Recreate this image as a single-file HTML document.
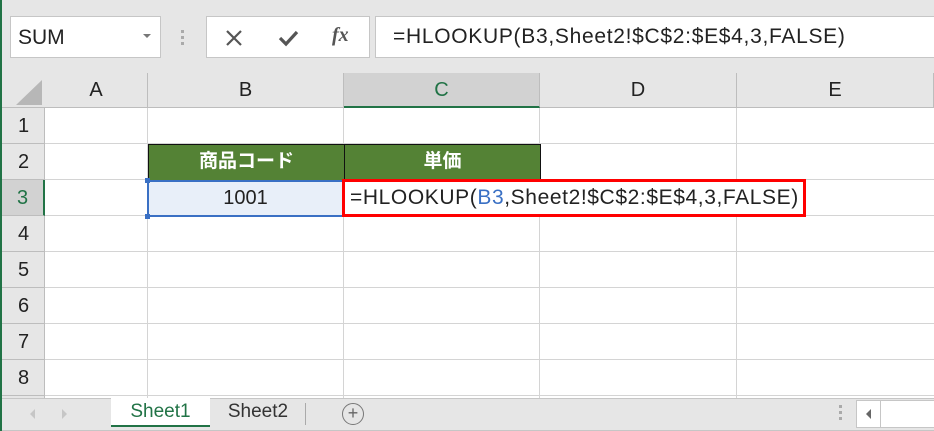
<!DOCTYPE html>
<html><head><meta charset="utf-8"><style>
*{margin:0;padding:0;box-sizing:border-box}
body{width:934px;height:431px;overflow:hidden;background:#e6e6e6;font-family:"Liberation Sans","Noto Sans CJK JP",sans-serif;position:relative}
.a{position:absolute}
.hl{position:absolute;height:1px;background:#d4d4d4}
.vl{position:absolute;width:1px;background:#d4d4d4}
.ch{position:absolute;top:73px;height:35px;line-height:35px;text-align:center;font-size:20px;color:#222;border-right:1px solid #bdbdbd}
.rh{position:absolute;left:2px;width:43px;height:36px;line-height:36px;text-align:center;font-size:20px;color:#222;border-bottom:1px solid #bdbdbd}
</style></head><body>
<div class="a" style="left:0;top:0;width:2px;height:431px;background:#217346"></div>
<div class="a" style="left:10px;top:16px;width:151px;height:42px;background:#fff;border:1px solid #c6c6c6;font-size:21px;line-height:42px;padding-left:7px;color:#222">SUM</div>
<div class="a" style="left:143px;top:34px;width:0;height:0;border-left:4px solid transparent;border-right:4px solid transparent;border-top:4px solid #777"></div>
<div class="a" style="left:181px;top:30px;width:3px;height:3px;background:#aaa;box-shadow:0 6px 0 #aaa,0 12px 0 #aaa"></div>
<div class="a" style="left:206px;top:16px;width:164px;height:42px;background:#fff;border:1px solid #c6c6c6"></div>
<svg class="a" style="left:224px;top:28px" width="20" height="20"><path d="M3 3L17 17M17 3L3 17" stroke="#555" stroke-width="2.2"/></svg>
<svg class="a" style="left:277px;top:28px" width="24" height="20"><path d="M3 10L9 16L20 4" stroke="#555" stroke-width="3.2" fill="none"/></svg>
<div class="a" style="left:332px;top:24px;font-family:'Liberation Serif',serif;font-style:italic;font-weight:bold;font-size:20px;color:#555">fx</div>
<div class="a" style="left:375px;top:16px;width:570px;height:42px;background:#fff;border:1px solid #c6c6c6;font-size:21px;line-height:40px;padding-left:17px;color:#222;letter-spacing:0.7px">=HLOOKUP(B3,Sheet2!$C$2:$E$4,3,FALSE)</div>
<div class="a" style="left:2px;top:73px;width:932px;height:325px;background:#fff"></div>
<div class="a" style="left:2px;top:73px;width:932px;height:35px;background:#e6e6e6;border-bottom:1px solid #bdbdbd"></div>
<div class="a" style="left:2px;top:108px;width:43px;height:290px;background:#e6e6e6;border-right:1px solid #bdbdbd"></div>
<svg class="a" style="left:12px;top:78px" width="32" height="28"><path d="M30 2V27H4Z" fill="#b7b7b7"/></svg>
<div class="ch" style="left:45px;width:103px">A</div>
<div class="ch" style="left:148px;width:196px">B</div>
<div class="ch" style="left:344px;width:196px;background:#d2d2d2;color:#217346;border-bottom:2px solid #217346">C</div>
<div class="ch" style="left:540px;width:197px">D</div>
<div class="ch" style="left:737px;width:197px">E</div>
<div class="rh" style="top:108px">1</div>
<div class="rh" style="top:144px">2</div>
<div class="rh" style="top:180px;background:#d2d2d2;color:#217346;border-right:2px solid #217346">3</div>
<div class="rh" style="top:216px">4</div>
<div class="rh" style="top:252px">5</div>
<div class="rh" style="top:288px">6</div>
<div class="rh" style="top:324px">7</div>
<div class="rh" style="top:360px">8</div>
<div class="hl" style="left:45px;top:143px;width:889px"></div>
<div class="hl" style="left:45px;top:179px;width:889px"></div>
<div class="hl" style="left:45px;top:215px;width:889px"></div>
<div class="hl" style="left:45px;top:251px;width:889px"></div>
<div class="hl" style="left:45px;top:287px;width:889px"></div>
<div class="hl" style="left:45px;top:323px;width:889px"></div>
<div class="hl" style="left:45px;top:359px;width:889px"></div>
<div class="hl" style="left:45px;top:395px;width:889px"></div>
<div class="vl" style="left:147px;top:108px;height:290px"></div>
<div class="vl" style="left:343px;top:108px;height:290px"></div>
<div class="vl" style="left:539px;top:108px;height:290px"></div>
<div class="vl" style="left:736px;top:108px;height:290px"></div>
<div class="a" style="left:148px;top:144px;width:197px;height:37px;background:#548235;border:1px solid #111;color:#fff;font-weight:bold;font-size:19px;text-align:center;line-height:34px">商品コード</div>
<div class="a" style="left:344px;top:144px;width:197px;height:37px;background:#548235;border:1px solid #111;color:#fff;font-weight:bold;font-size:19px;text-align:center;line-height:34px">単価</div>
<div class="a" style="left:147px;top:180px;width:197px;height:37px;background:#e8eff9;border:2px solid #3a70c4;font-size:20px;text-align:center;line-height:33px;color:#222">1001</div>
<div class="a" style="left:145px;top:178px;width:5px;height:5px;background:#3a70c4"></div>
<div class="a" style="left:145px;top:214px;width:5px;height:5px;background:#3a70c4"></div>
<div class="a" style="left:342px;top:179px;width:464px;height:38px;background:#fff;border:3px solid #f00;font-size:21px;line-height:32px;padding-left:5px;color:#222;white-space:nowrap;letter-spacing:0.6px">=HLOOKUP(<span style="color:#3a70c4">B3</span>,Sheet2!$C$2:$E$4,3,FALSE)</div>
<div class="a" style="left:2px;top:398px;width:932px;height:33px;background:#e6e6e6;border-top:1px solid #c6c6c6;border-bottom:1px solid #c6c6c6"></div>
<div class="a" style="left:30px;top:409px;width:0;height:0;border-top:5px solid transparent;border-bottom:5px solid transparent;border-right:5px solid #c6c6c6"></div>
<div class="a" style="left:62px;top:409px;width:0;height:0;border-top:5px solid transparent;border-bottom:5px solid transparent;border-left:5px solid #c6c6c6"></div>
<div class="a" style="left:111px;top:398px;width:99px;height:29px;background:#fff;border-bottom:2px solid #217346;color:#217346;font-size:19px;text-align:center;line-height:27px">Sheet1</div>
<div class="a" style="left:210px;top:398px;width:96px;height:29px;color:#333;font-size:19px;text-align:center;line-height:27px">Sheet2</div>
<div class="a" style="left:305px;top:403px;width:1px;height:22px;background:#aaa"></div>
<div class="a" style="left:342px;top:403px;width:22px;height:22px;border:1.5px solid #777;border-radius:50%;text-align:center;line-height:18px;font-size:18px;color:#666">+</div>
<div class="a" style="left:839px;top:405px;width:3px;height:3px;background:#aaa;box-shadow:0 6px 0 #aaa,0 12px 0 #aaa"></div>
<div class="a" style="left:856px;top:400px;width:80px;height:28px;background:#fff;border:1px solid #c6c6c6"></div>
<div class="a" style="left:880px;top:400px;width:1px;height:28px;background:#c6c6c6"></div>
<div class="a" style="left:866px;top:409px;width:0;height:0;border-top:5px solid transparent;border-bottom:5px solid transparent;border-right:5px solid #666"></div>
</body></html>
